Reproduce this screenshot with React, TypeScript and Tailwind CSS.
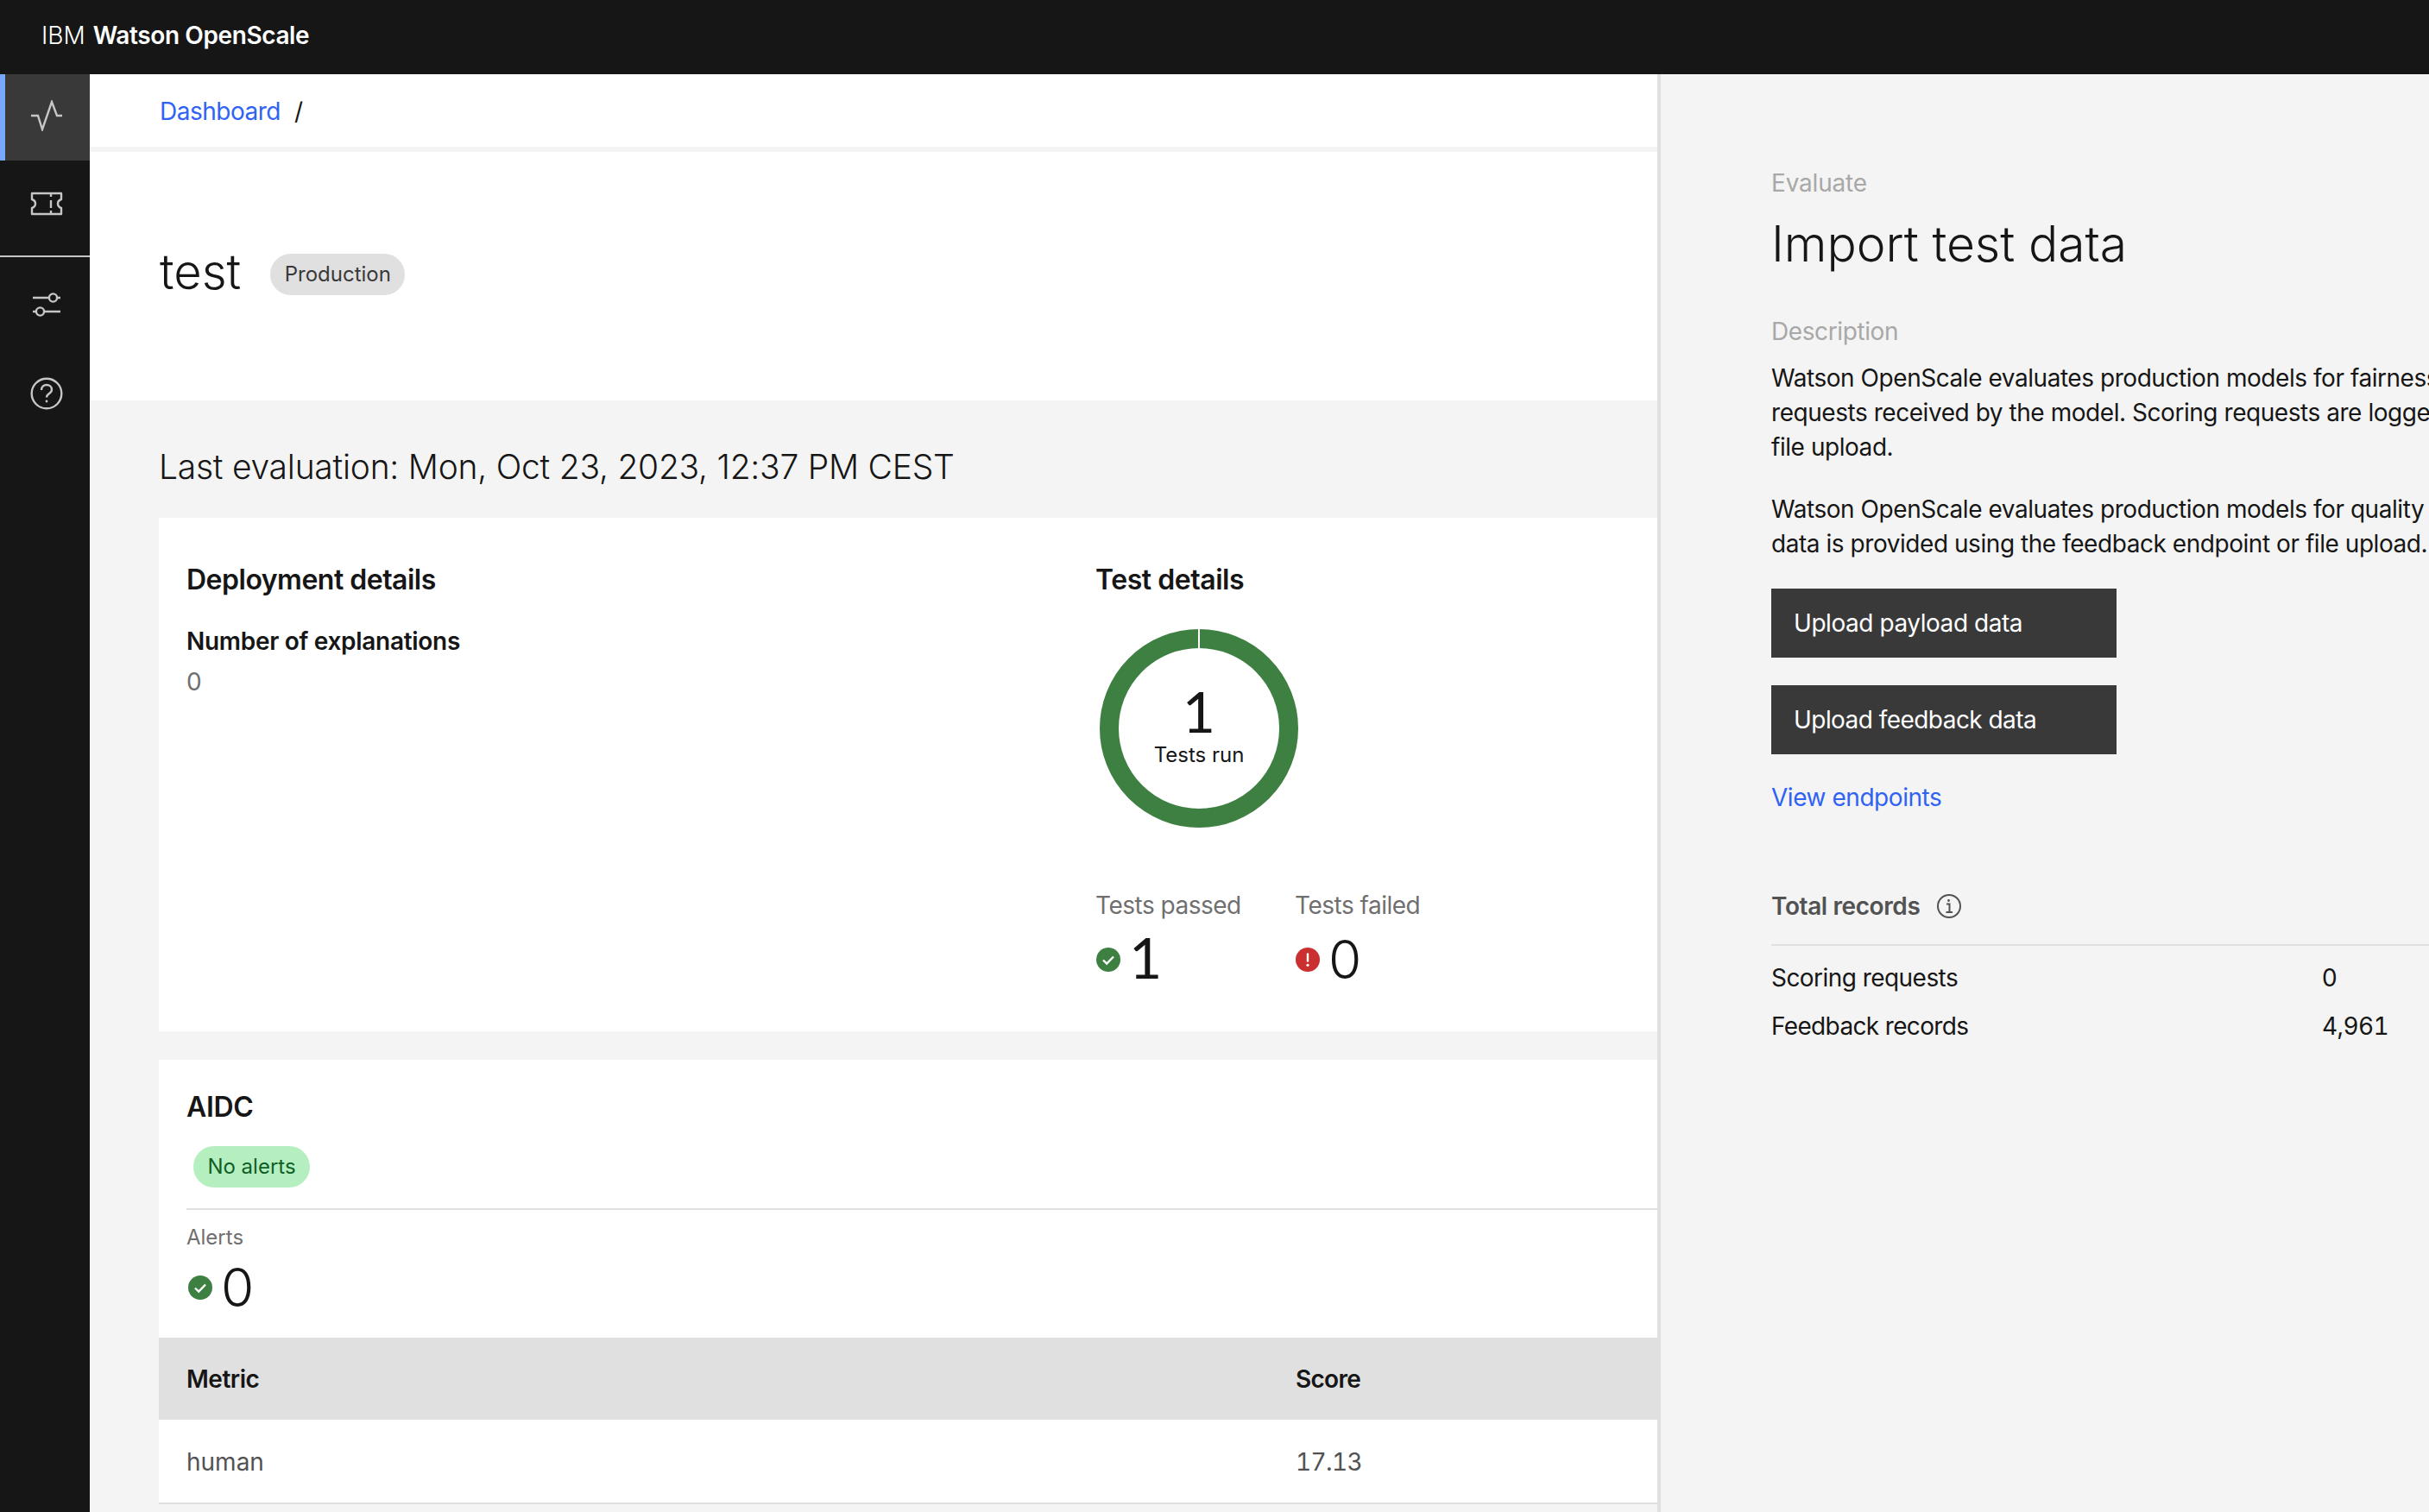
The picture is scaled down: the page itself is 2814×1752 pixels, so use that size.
import React from "react";

const Check = () => (
  <svg width="28" height="28" viewBox="0 0 28 28" className="shrink-0">
    <circle cx="14" cy="14" r="14" fill="#3e8042" />
    <path d="M8 14.5l4.2 4L20 10.5" fill="none" stroke="#fff" strokeWidth="2.4" />
  </svg>
);

const Alert = () => (
  <svg width="28" height="28" viewBox="0 0 28 28" className="shrink-0">
    <circle cx="14" cy="14" r="14" fill="#c9302f" />
    <rect x="12.8" y="6.5" width="2.4" height="10" fill="#fff" />
    <circle cx="14" cy="20.3" r="1.6" fill="#fff" />
  </svg>
);

const Stat = ({ label, icon, value, foot }: { label: string; icon: React.ReactNode; value: string; foot?: boolean }) => (
  <div className="w-[231px]">
    <div className="text-[28px] leading-[40px] tracking-[-0.5px] text-[#6f6f6f]">{label}</div>
    <div className="mt-[10px] ml-[1px] flex h-[66px] items-center gap-[10px]">
      {icon}
      <span className={foot ? "mt-[-6px] font-[family-name:Lato,sans-serif] text-[66px] leading-[66px] font-normal text-[#161616]" : "text-[62px] leading-[66px] font-light text-[#161616]"}>{value}</span>
    </div>
  </div>
);

export default function App() {
  return (
    <div className="flex h-[1752px] w-[2814px] flex-col overflow-hidden bg-white font-[family-name:Inter,sans-serif] text-[#161616]">
      <header className="flex h-[86px] shrink-0 items-center bg-[#161616] pb-[4px] pl-[48px] text-[28px] text-white">
        <span className="font-light">IBM</span>
        <span className="ml-[9px] font-semibold tracking-[-0.4px]">Watson OpenScale</span>
      </header>
      <div className="flex min-h-0 flex-1">
        <nav className="w-[104px] shrink-0 bg-[#161616]">
          <div className="flex h-[100px] items-center justify-center border-l-[6px] border-[#78a9ff] bg-[#393939] pr-[2px] pb-[4px]">
            <svg width="36" height="36" viewBox="0 0 36 36" fill="none" stroke="#c6c6c6" strokeWidth="2.4"><path d="M0 18h8l5 16L24 2l6 16h6" /></svg>
          </div>
          <div className="flex h-[112px] items-center justify-center border-b-[2px] border-[#c6c6c6] pb-[10px]">
            <svg width="38" height="28" viewBox="0 0 38 28" fill="none" stroke="#c6c6c6" strokeWidth="2.4" className="ml-[4px]"><path d="M2 2h34v7c-3 1-4 3-4 5s1 4 4 5v7H2v-7c3-1 4-3 4-5s-1-4-4-5z" strokeLinejoin="round" /><path d="M24 2v4M24 10v9M24 22v4" /></svg>
          </div>
          <div className="flex h-[112px] items-center justify-center">
            <svg width="34" height="30" viewBox="0 0 34 30" fill="none" stroke="#c6c6c6" strokeWidth="2.4" className="mb-[2px] ml-[3px]"><path d="M1 7h20M28 7h5M1 23h5M13 23h20" /><circle cx="24.5" cy="7" r="4.6" /><circle cx="9.5" cy="23" r="4.6" /></svg>
          </div>
          <div className="flex h-[92px] items-center justify-center">
            <svg width="38" height="38" viewBox="0 0 38 38" fill="none" stroke="#c6c6c6" strokeWidth="2.4" className="ml-[4px]"><circle cx="19" cy="19" r="17.3" /><path d="M13 15c0-4 3-6 6-6s6 2 6 5.500c0 5-6 4-6 9" /><circle cx="19" cy="28" r="1.4" fill="#c6c6c6" stroke="none" /></svg>
          </div>
        </nav>

        <main className="h-full w-[1816px] shrink-0 overflow-hidden bg-[#f4f4f4]">
          <div className="flex h-[84px] items-center bg-white pt-[2px] pl-[81px] text-[28px]">
            <a className="tracking-[-0.5px] text-[#2f62f5]">Dashboard</a>
            <span className="ml-[16px]">/</span>
          </div>
          <div className="mt-[6px] flex h-[288px] items-center bg-white pb-[10px] pl-[81px]">
            <h1 className="text-[56px] leading-[72px] font-light">test</h1>
            <span className="mt-[6px] ml-[34px] flex h-[48px] w-[156px] items-center justify-center rounded-full bg-[#e0e0e0] text-[24px] text-[#393939]">Production</span>
          </div>

          <div className="pl-[80px]">
            <h2 className="flex h-[136px] items-center pt-[18px] text-[39px] leading-[56px] font-light tracking-[-0.25px]">Last evaluation: Mon, Oct 23, 2023, 12:37 PM CEST</h2>
            <section className="flex h-[595px] bg-white pl-[32px]">
              <div className="w-[1053px] shrink-0">
                <h3 className="mt-[50px] text-[32px] leading-[44px] font-semibold tracking-[-0.5px]">Deployment details</h3>
                <div className="mt-[29px] text-[28px] leading-[40px] font-semibold tracking-[-0.3px]">Number of explanations</div>
                <div className="mt-[7px] text-[28px] leading-[40px] text-[#6f6f6f]">0</div>
              </div>
              <div>
                <h3 className="mt-[50px] text-[32px] leading-[44px] font-semibold tracking-[-0.45px]">Test details</h3>
                <div className="relative mt-[35px] ml-[5px] h-[230px] w-[230px]">
                  <svg width="230" height="230" viewBox="0 0 230 230" fill="none">
                    <circle cx="115" cy="115" r="104" stroke="#3e8042" strokeWidth="22" />
                    <rect x="114" y="0" width="2" height="22" fill="#fff" />
                  </svg>
                  <div className="absolute inset-0 flex flex-col items-center pt-[64px]">
                    <span className="font-[family-name:Lato,sans-serif] text-[66px] leading-[62px] font-normal">1</span>
                    <span className="mt-[4px] text-[24px] leading-[32px]">Tests run</span>
                  </div>
                </div>
                <div className="mt-[70px] flex">
                  <Stat label="Tests passed" icon={<Check />} value="1" foot />
                  <Stat label="Tests failed" icon={<Alert />} value="0" />
                </div>
              </div>
            </section>

            <section className="mt-[33px] bg-white">
              <div className="pt-[35px] pl-[32px]">
                <h3 className="text-[32px] leading-[40px] font-semibold tracking-[-0.3px]">AIDC</h3>
                <span className="mt-[25px] ml-[8px] flex h-[48px] w-[135px] items-center justify-center rounded-full bg-[#b5efc0] text-[24px] text-[#0e6027]">No alerts</span>
                <div className="mt-[24px] h-[2px] bg-[#e0e0e0]" />
                <div className="mt-[16px] text-[24px] leading-[32px] text-[#6f6f6f]">Alerts</div>
                <div className="mt-[9px] ml-[2px] flex h-[66px] items-center gap-[10px]">
                  <Check />
                  <span className="text-[62px] leading-[66px] font-light">0</span>
                </div>
              </div>
              <div className="mt-[25px] flex h-[95px] items-center bg-[#e0e0e0] pl-[32px] text-[28px] font-semibold">
                <span className="w-[1285px] tracking-[-0.5px]">Metric</span>
                <span className="tracking-[-0.7px]">Score</span>
              </div>
              <div className="flex h-[98px] items-center border-b-[2px] border-[#e0e0e0] pt-[2px] pl-[32px] text-[28px] text-[#525252]">
                <span className="w-[1285px]">human</span>
                <span className="tracking-[-0.6px] tabular-nums">17.13</span>
              </div>
            </section>
          </div>
        </main>

        <aside className="h-full min-w-0 flex-1 overflow-hidden border-l-[4px] border-[#e0e0e0] bg-[#f4f4f4] pl-[128px]">
          <div className="mt-[106px] text-[28px] leading-[40px] tracking-[-0.2px] text-[#a8a8a8]">Evaluate</div>
          <h2 className="mt-[15px] text-[57px] leading-[72px] font-light tracking-[-0.1px]">Import test data</h2>
          <div className="mt-[45px] text-[28px] leading-[40px] tracking-[-0.4px] text-[#a8a8a8]">Description</div>
          <p className="mt-[14px] text-[28px] leading-[40px] tracking-[-0.45px] whitespace-nowrap">
            Watson OpenScale evaluates production models for fairness and explainability<br />
            requests received by the model. Scoring requests are logged using the endpoint or<br />
            file upload.
          </p>
          <p className="mt-[32px] text-[28px] leading-[40px] tracking-[-0.45px] whitespace-nowrap">
            Watson OpenScale evaluates production models for quality when feedback<br />
            data is provided using the feedback endpoint or file upload.
          </p>
          <button className="mt-[32px] block h-[80px] w-[400px] bg-[#393939] pl-[26px] text-left text-[28px] tracking-[-0.45px] text-white">Upload payload data</button>
          <button className="mt-[32px] block h-[80px] w-[400px] bg-[#393939] pl-[26px] text-left text-[28px] tracking-[-0.55px] text-white">Upload feedback data</button>
          <a className="mt-[30px] block text-[28px] leading-[40px] tracking-[-0.45px] text-[#2f62f5]">View endpoints</a>
          <div className="mt-[86px] flex h-[40px] items-center text-[28px] font-semibold text-[#525252]">
            <span className="tracking-[-0.4px]">Total records</span>
            <svg width="28" height="28" viewBox="0 0 28 28" fill="none" stroke="#525252" strokeWidth="2" className="ml-[20px]"><circle cx="14" cy="14" r="13" /><path d="M11 11.500h3.500V21M10.500 21h7.500" /><circle cx="13.500" cy="7.500" r="1.400" fill="#525252" stroke="none" /></svg>
          </div>
          <div className="mt-[24px] h-[2px] bg-[#e0e0e0]" />
          <div className="mt-[17px] flex h-[40px] items-center text-[28px]">
            <span className="w-[638px] tracking-[-0.55px]">Scoring requests</span>
            <span>0</span>
          </div>
          <div className="mt-[16px] flex h-[40px] items-center text-[28px]">
            <span className="w-[638px] tracking-[-0.65px]">Feedback records</span>
            <span className="tracking-[-0.6px] tabular-nums">4,961</span>
          </div>
        </aside>
      </div>
    </div>
  );
}
